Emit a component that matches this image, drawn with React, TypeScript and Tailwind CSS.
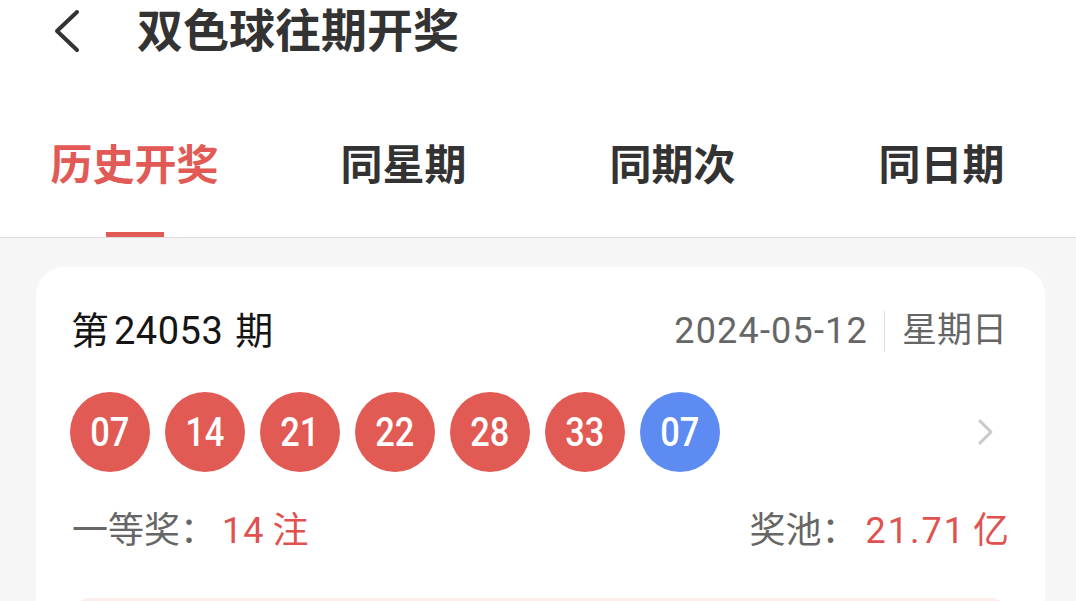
import React from "react";

const FONT = { fontFamily: 'Roboto, "Noto Sans CJK SC", sans-serif' };

const reds = ["07", "14", "21", "22", "28", "33"];
const blues = ["07"];

function Ball({ n, blue }: { n: string; blue?: boolean }) {
  return (
    <div
      className={`w-[80px] h-[80px] rounded-full flex items-center justify-center text-white text-[40px] font-medium leading-none ${
        blue ? "bg-[#5d8bf1]" : "bg-[#e25a54]"
      }`}
    >
      <span className="pt-[1px] scale-x-[0.86] inline-block">{n}</span>
    </div>
  );
}

export default function App() {
  const tabs = ["历史开奖", "同星期", "同期次", "同日期"];
  return (
    <div className="w-[1076px] h-[601px] overflow-hidden bg-[#f6f6f6]" style={FONT}>
      <div className="bg-white">
        {/* header */}
        <div className="h-[62px] flex items-center">
          <svg width="32" height="46" viewBox="0 0 32 46" className="ml-[50px]">
            <polyline
              points="27,8 7,27 27,46"
              fill="none"
              stroke="#333"
              strokeWidth="4"
              strokeLinecap="round"
              strokeLinejoin="round"
              transform="translate(0,-4)"
            />
          </svg>
          <div className="ml-[55px] text-[46px] font-bold text-[#333] leading-none">
            双色球往期开奖
          </div>
        </div>
        {/* tabs */}
        <div className="grid grid-cols-4 pt-[80px] border-b border-[#dddddd]">
          {tabs.map((t, i) => (
            <div key={t} className="flex flex-col items-center">
              <div
                className={`text-[42px] font-bold leading-[48px] ${
                  i === 0 ? "text-[#e25a55]" : "text-[#333]"
                }`}
              >
                {t}
              </div>
              <div
                className={`mt-[42px] h-[5px] w-[58px] ${i === 0 ? "bg-[#e25a55]" : "bg-transparent"}`}
              />
            </div>
          ))}
        </div>
      </div>

      {/* card */}
      <div className="mt-[29px] ml-[36px] mr-[31px] bg-white rounded-[28px] pt-[40px] pb-[30px]">
        <div className="flex items-center justify-between pl-[35px] pr-[38px] h-[48px]">
          <div className="flex items-center text-[38px] text-[#151515] leading-[48px]">
            <span>第</span>
            <span className="ml-[5px] mr-[12px] tracking-[0.5px]">24053</span>
            <span>期</span>
          </div>
          <div className="flex items-center text-[#666] leading-[48px]">
            <span className="text-[36px] tracking-[1.2px]">2024-05-12</span>
            <span className="ml-[16px] mr-[17px] w-[1px] h-[41px] bg-[#dcdcdc]" />
            <span className="text-[35px]">星期日</span>
          </div>
        </div>

        <div className="mt-[37px] flex items-center pl-[34px] pr-[50px]">
          <div className="flex gap-[15px]">
            {reds.map((n, i) => (
              <Ball key={i} n={n} />
            ))}
            {blues.map((n, i) => (
              <Ball key={"b" + i} n={n} blue />
            ))}
          </div>
          <div className="flex-1" />
          <svg width="18" height="28" viewBox="0 0 18 28">
            <polyline
              points="3,3 14,14 3,25"
              fill="none"
              stroke="#c9c9c9"
              strokeWidth="3"
              strokeLinecap="round"
              strokeLinejoin="round"
            />
          </svg>
        </div>

        <div className="mt-[35px] flex items-center justify-between pl-[36px] pr-[36px] h-[48px] leading-[48px]">
          <div className="flex items-center text-[36px]">
            <span className="text-[#666]">一等奖：</span>
            <span className="ml-[6px] text-[#e0524f] tracking-[1px]">14</span>
            <span className="ml-[8px] text-[#e0524f]">注</span>
          </div>
          <div className="flex items-center text-[36px]">
            <span className="text-[#666]">奖池：</span>
            <span className="ml-[8px] text-[#e0524f] tracking-[2px]">21.71</span>
            <span className="ml-[7px] text-[#e0524f]">亿</span>
          </div>
        </div>

        <div className="mt-[43px] mx-[39px] h-[40px] rounded-t-[14px] bg-[#fdecec]" />
      </div>
    </div>
  );
}
